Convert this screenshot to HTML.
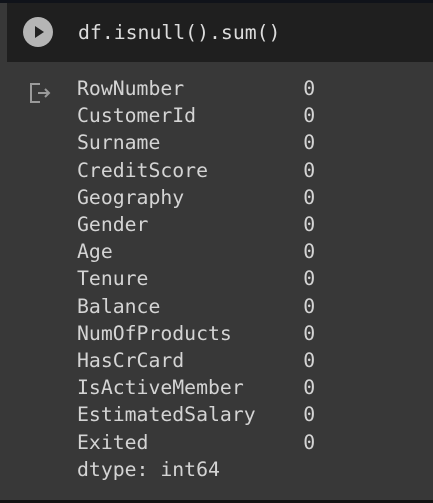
<!DOCTYPE html><html><head><style>
body{margin:0;width:433px;height:503px;background:#383838;overflow:hidden;position:relative;font-family:"DejaVu Sans Mono","Liberation Mono",monospace}
.top{position:absolute;left:0;top:0;width:433px;height:3px;background:#10131a}
.code{position:absolute;left:7px;top:3px;width:426px;height:59px;background:#1f1f1f}
.btn{position:absolute;left:23px;top:17px;width:30px;height:30px;border-radius:50%;background:#b5b5b5}
.btn:after{content:"";position:absolute;left:12px;top:9px;border-left:9px solid #222;border-top:6px solid transparent;border-bottom:6px solid transparent}
.src{position:absolute;left:78px;top:20px;font-size:19.8px;color:#dcdcdc;line-height:26px;white-space:pre}
.out{position:absolute;left:77px;top:75px;font-size:19.8px;color:#d4d4d4;line-height:27.2px;white-space:pre}
.bot{position:absolute;left:0;top:500px;width:433px;height:3px;background:#111}
</style></head><body>
<div class="top"></div>
<div class="code"></div>
<div class="btn"></div>
<div class="src">df.isnull().sum()</div>
<svg style="position:absolute;left:28px;top:82px" width="24" height="22" viewBox="0 0 24 22"><path d="M12 2H3v18h9" fill="none" stroke="#9a9a9a" stroke-width="2"/><path d="M10 11h10M17 7l4 4-4 4" fill="none" stroke="#9a9a9a" stroke-width="2"/></svg>
<div class="out">RowNumber          0
CustomerId         0
Surname            0
CreditScore        0
Geography          0
Gender             0
Age                0
Tenure             0
Balance            0
NumOfProducts      0
HasCrCard          0
IsActiveMember     0
EstimatedSalary    0
Exited             0
dtype: int64</div>
<div class="bot"></div>
</body></html>
